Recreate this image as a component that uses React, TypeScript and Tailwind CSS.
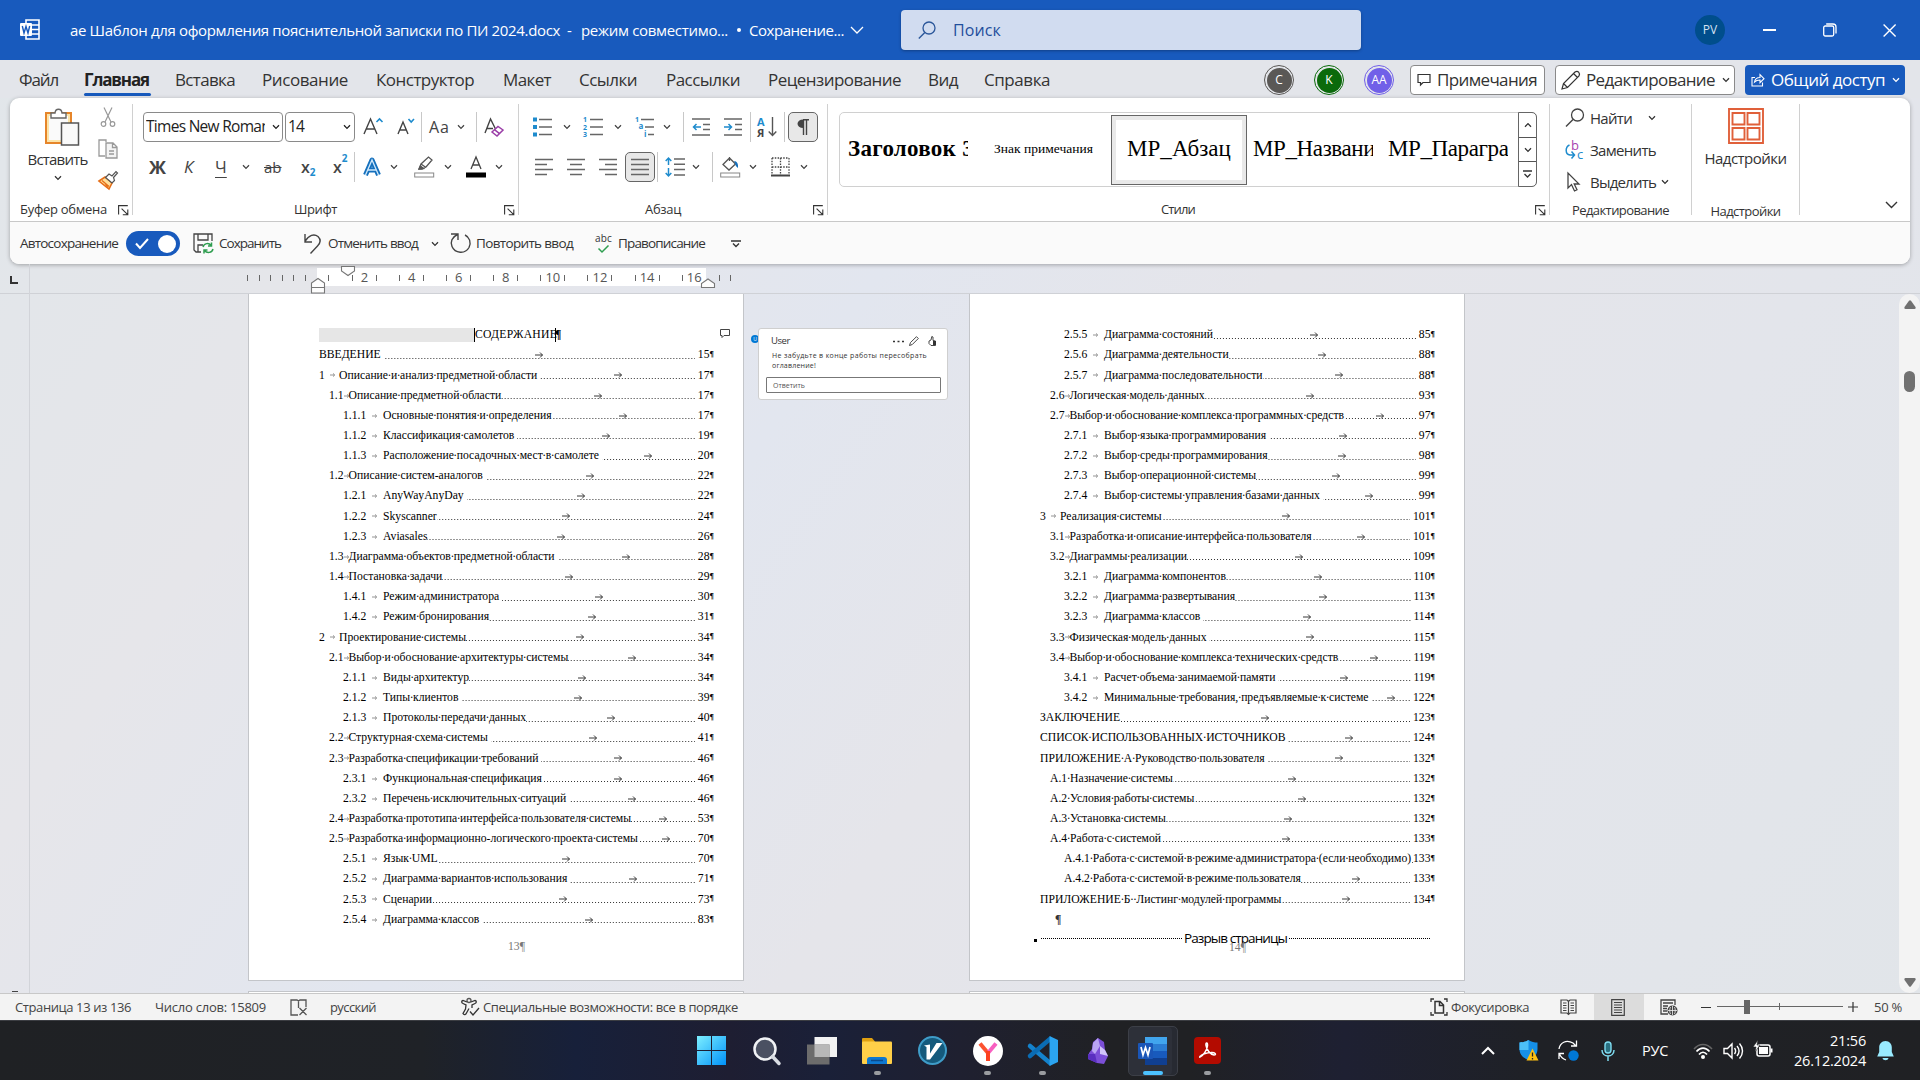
import React, { Fragment, useLayoutEffect, useRef } from 'react';

/* Label that spreads its letters so the text exactly fills its slot. */
function Fit({ className = '', children }: { className?: string; children: string }) {
  const outer = useRef<HTMLSpanElement>(null);
  const inner = useRef<HTMLSpanElement>(null);
  useLayoutEffect(() => {
    const o = outer.current;
    const i = inner.current;
    if (!o || !i) return;
    i.style.letterSpacing = '0px';
    const gap = o.getBoundingClientRect().width - i.getBoundingClientRect().width;
    i.style.letterSpacing = `${gap / children.length}px`;
  }, [children]);
  return (
    <span ref={outer} className={'block shrink-0 whitespace-nowrap ' + className}>
      <span ref={inner} className="inline-block whitespace-pre">{children}</span>
    </span>
  );
}

function Chev({ className = '' }: { className?: string }) {
  return (
    <svg className={'shrink-0 ' + className} width="8" height="6" viewBox="0 0 8 6" fill="none" stroke="currentColor" strokeWidth="1.3">
      <path d="M1 1.2 4 4.4 7 1.2" />
    </svg>
  );
}

function Sep({ className = '' }: { className?: string }) {
  return <div className={'h-[30px] w-px shrink-0 bg-[#c8c8c8] ' + className} />;
}

function Divider() {
  return <div className="mt-[6px] h-[111px] w-px shrink-0 bg-[#d0d0d0]" />;
}

function Launcher({ className = '' }: { className?: string }) {
  return (
    <svg className={'shrink-0 ' + className} width="11" height="11" viewBox="0 0 11 11" fill="none" stroke="#333" strokeWidth="1.1">
      <path d="M.6 9.5V.6h9.2M3.6 3.6l5.6 5.6M9.8 4.6v5.2H4.8" />
    </svg>
  );
}

function Svg({ w = 20, h = 20, className = '', children }: { w?: number; h?: number; className?: string; children: React.ReactNode }) {
  return (
    <svg className={'shrink-0 overflow-visible ' + className} width={w} height={h} viewBox={`0 0 ${w} ${h}`} fill="none" stroke="#555" strokeWidth="1.3">
      {children}
    </svg>
  );
}

const serif = "font-['Liberation_Serif',serif]";

function TitleBar() {
  return (
    <header className="flex h-[60px] items-center bg-[#185abd] text-white">
      <Svg className="ml-5" w={20} h={22}>
        <path d="M6 1h13v19H6zM6 6h13M6 10.5h13M6 15h13" stroke="#fff" strokeWidth="1.6" />
        <rect x="0" y="4" width="12" height="13" rx="1" fill="#fff" stroke="none" />
        <path d="M2.3 7l1.7 7 2-6.5L8 14l1.7-7" stroke="#185abd" strokeWidth="1.4" />
      </Svg>
      <Fit className="ml-[30px] w-[490px] text-[15px]">ае Шаблон для оформления пояснительной записки по ПИ 2024.docx</Fit>
      <span className="ml-[7px] w-[14px] text-[15px]">-</span>
      <Fit className="w-[147px] text-[15px]">режим совместимо...</Fit>
      <span className="ml-[9px] size-[4px] rounded-full bg-white" />
      <Fit className="ml-2 w-[95px] text-[15px]">Сохранение...</Fit>
      <Svg className="ml-[6px]" w={14} h={8}><path d="M1 1l6 6 6-6" stroke="#fff" strokeWidth="1.3" /></Svg>
      <div className="ml-[37px] flex h-10 w-[460px] items-center rounded-[4px] bg-[#d1dcf0] text-[#1f4e9c] shadow-[0_1px_3px_rgba(0,0,0,.3)]">
        <Svg className="ml-[17px]" w={18} h={18}>
          <circle cx="11" cy="7" r="6" stroke="#2b579a" /><path d="M6.8 11.4.8 17.4" stroke="#2b579a" strokeWidth="1.4" />
        </Svg>
        <Fit className="ml-[17px] w-[48px] text-[16px]">Поиск</Fit>
      </div>
      <div className="ml-[334px] flex size-[30px] items-center justify-center rounded-full bg-[#004e8c] text-[12px] text-[#d5e2f2]">PV</div>
      <div className="ml-[38px] h-[1.5px] w-[13px] bg-white" />
      <Svg className="ml-[47px]" w={14} h={14}>
        <rect x=".7" y="3" width="10" height="10" rx="1.5" stroke="#fff" /><path d="M3.2 1h6.8a3 3 0 0 1 3 3v6.6" stroke="#fff" />
      </Svg>
      <Svg className="ml-[46px]" w={13} h={13}><path d="M.6.6l12 12M12.6.6l-12 12" stroke="#fff" strokeWidth="1.4" /></Svg>
    </header>
  );
}

function Avatar({ className, children }: { className: string; children: string }) {
  return (
    <div className={'flex size-[30px] shrink-0 items-center justify-center rounded-full border bg-clip-content p-[1.5px] text-[12px] text-white ' + className}>
      {children}
    </div>
  );
}

function Tabs() {
  return (
    <nav className="flex h-[38px] items-center bg-[#e3e5ea] pt-px text-[17px] text-[#333]">
      <Fit className="ml-[19px] w-[39px]">Файл</Fit>
      <div className="ml-[26px] flex h-[36px] w-[67px] flex-col justify-end pb-[2px]">
        <Fit className="w-[65px] font-bold text-[#222]">Главная</Fit>
        <div className="h-[3px] rounded-full bg-[#185abd]" />
      </div>
      <Fit className="ml-[24px] w-[60px]">Вставка</Fit>
      <Fit className="ml-[27px] w-[86px]">Рисование</Fit>
      <Fit className="ml-[28px] w-[98px]">Конструктор</Fit>
      <Fit className="ml-[29px] w-[48px]">Макет</Fit>
      <Fit className="ml-[28px] w-[58px]">Ссылки</Fit>
      <Fit className="ml-[29px] w-[74px]">Рассылки</Fit>
      <Fit className="ml-[28px] w-[133px]">Рецензирование</Fit>
      <Fit className="ml-[27px] w-[30px]">Вид</Fit>
      <Fit className="ml-[26px] w-[66px]">Справка</Fit>
      <Avatar className="ml-[214px] border-[#5a5856] bg-[#5a5856]">C</Avatar>
      <Avatar className="ml-[20px] border-[#0b6a0b] bg-[#0b6a0b]">K</Avatar>
      <Avatar className="ml-[20px] border-[#7160e8] bg-[#7160e8]">AA</Avatar>
      <div className="ml-[16px] flex h-[30px] w-[135px] items-center rounded-[4px] border border-[#8a8a8a] bg-white">
        <Svg className="ml-[6px]" w={14} h={14}><path d="M1 1.5h12v8H6L3.5 12V9.5H1z" stroke="#333" strokeWidth="1.2" /></Svg>
        <Fit className="ml-[6px] w-[100px]">Примечания</Fit>
      </div>
      <div className="ml-[10px] flex h-[30px] w-[180px] items-center rounded-[4px] border border-[#8a8a8a] bg-white">
        <Svg className="ml-[5px]" w={20} h={20}>
          <path d="M1 19l1.5-5.5L14 2c2.8-2 5.5.8 4 4L6.5 17.5zM12.500 3.500l4 4M2.500 13.500l4 4" stroke="#333" strokeWidth="1.2" />
        </Svg>
        <Fit className="ml-[5px] w-[129px]">Редактирование</Fit>
        <Chev className="ml-[7px]" />
      </div>
      <div className="ml-[10px] flex h-[30px] w-[160px] items-center rounded-[4px] bg-[#185abd] text-white">
        <Svg className="ml-[6px]" w={14} h={14}>
          <path d="M4 4.500H1v8.500h10.500V9.500M3.500 9c.5-3 2.500-4.500 5.500-4.500V1.500l4 4.200-4 4V7C6.500 7 5 7.500 3.500 9z" stroke="#fff" strokeWidth="1.1" />
        </Svg>
        <Fit className="ml-[6px] w-[114px]">Общий доступ</Fit>
        <Chev className="ml-[7px]" />
      </div>
    </nav>
  );
}

function GroupLabel({ children }: { children: React.ReactNode }) {
  return <div className="flex h-[20px] items-center text-[13px] text-[#333]">{children}</div>;
}

function Clipboard() {
  return (
    <section className="flex w-[122px] flex-col">
      <div className="flex h-[102px]">
        <div className="flex w-[78px] flex-col items-center pl-[17px] pt-[10px]">
          <Svg w={36} h={38} className="ml-2">
            <rect x="2" y="5" width="25" height="30" fill="#fce4a8" stroke="#e6852a" strokeWidth="2" />
            <rect x="5" y="8" width="19" height="24" fill="#fafafa" stroke="none" />
            <path d="M7 10V5h4c.5-5 6.500-5 7 0h4v5z" fill="#fff" stroke="#666" strokeWidth="1.4" />
            <rect x="17.500" y="15" width="17" height="22" fill="#fafafa" stroke="#555" strokeWidth="1.5" />
          </Svg>
          <Fit className="mt-[3px] w-[60px] text-[15px] leading-[20px] text-[#333]">Вставить</Fit>
          <Chev className="mt-[6px] text-[#333]" />
        </div>
        <div className="ml-[10px] flex w-[20px] flex-col pt-[9px]">
          <Svg w={20} h={20}>
            <path d="M6 .5l7 14.500M14 .5L7 15" stroke="#999" strokeWidth="1.2" /><circle cx="5.500" cy="17" r="2.300" stroke="#999" strokeWidth="1.2" /><circle cx="14.500" cy="17" r="2.300" stroke="#999" strokeWidth="1.2" />
          </Svg>
          <Svg className="mt-[12px]" w={20} h={20}>
            <path d="M8 3V1H1v16h6" stroke="#999" /><path d="M8 4h7l4 4v11H8zM14.500 4v4.500H19M11 12h5M11 15h5" stroke="#999" fill="#f4f4f4" />
          </Svg>
          <Svg className="mt-[11px]" w={20} h={20}>
            <path d="M1 11l6-4 7 6-3 6z" fill="#ffdf9a" stroke="#e6701a" strokeWidth="1.6" /><path d="M4 10.500l7 6M7.500 14L10 18" stroke="#e6701a" />
            <path d="M7.500 7.500L11 4l3 2 4-4.500 1.500 1.500-4 4.500 1 3-2.500 2.500z" fill="#fff" stroke="#555" strokeWidth="1.2" />
          </Svg>
        </div>
      </div>
      <GroupLabel><Fit className="ml-[10px] w-[87px]">Буфер обмена</Fit><Launcher className="ml-[11px]" /></GroupLabel>
    </section>
  );
}

function FontGroup() {
  return (
    <section className="flex w-[385px] flex-col pt-[14px] text-[#444]">
      <div className="flex h-[30px] items-center pl-[10px]">
        <div className="flex h-[30px] w-[140px] items-center rounded-[4px] border border-[#8a8a8a] text-[15.5px] text-[#222]">
          <div className="ml-[2px] w-[119px] overflow-hidden"><Fit className="w-[124px]">Times New Roman</Fit></div>
          <Chev className="ml-[7px]" />
        </div>
        <div className="ml-[2px] flex h-[30px] w-[70px] items-center rounded-[4px] border border-[#8a8a8a] text-[15.5px] text-[#222]">
          <Fit className="ml-[2px] w-[16px]">14</Fit>
          <Chev className="ml-[39px]" />
        </div>
        <Svg className="ml-[8px]" w={20} h={20}>
          <path d="M1 17L7.500 2 14 17M3.500 12h8" stroke="#444" strokeWidth="1.4" /><path d="M13.500 5l3-3 3 3" stroke="#1e8bcd" strokeWidth="1.6" />
        </Svg>
        <Svg className="ml-[13px]" w={20} h={20}>
          <path d="M2 17L7 5l5 12M4 13h6" stroke="#444" strokeWidth="1.4" /><path d="M12.500 2l2.700 3L18 2" stroke="#1e8bcd" strokeWidth="1.6" />
        </Svg>
        <Sep className="ml-[5px]" />
        <Fit className="ml-[7px] w-[21px] text-[16px]">Aa</Fit>
        <Chev className="ml-[7px]" />
        <Sep className="ml-[11px]" />
        <Svg className="ml-[7px]" w={20} h={20}>
          <path d="M1 16L6.500 2 12 13M3 11.500h6" stroke="#444" strokeWidth="1.4" /><path d="M8 15l6-5.500 5 3.500-6 6zM10.500 12.700l5 4" stroke="#9b3fa8" strokeWidth="1.5" fill="#fff" />
        </Svg>
      </div>
      <div className="mt-[10px] flex h-[30px] items-center pl-[16px]">
        <span className="w-[35px] text-[18px] font-bold">Ж</span>
        <span className="w-[31px] text-[17px] italic">К</span>
        <span className="w-[27px] text-[17px] underline underline-offset-4">Ч</span>
        <Chev />
        <span className="ml-[14px] w-[37px] text-[15px] line-through">ab</span>
        <span className="flex w-[32px] text-[16px] font-semibold">x<span className="mt-[10px] text-[10px] font-bold text-[#1e8bcd]">2</span></span>
        <span className="flex w-[21px] text-[16px] font-semibold">x<span className="-mt-[4px] text-[10px] font-bold text-[#1e8bcd]">2</span></span>
        <Sep />
        <Svg className="ml-[7px]" w={20} h={20}>
          <path d="M3.500 18L10 3l6.500 15M6 13h8" stroke="#1570bd" strokeWidth="5" strokeLinejoin="round" /><path d="M3.500 18L10 3l6.500 15M6 13h8" stroke="#cfe8fb" strokeWidth="1.3" />
        </Svg>
        <Chev className="ml-[8px]" />
        <Svg className="ml-[16px]" w={20} h={22}>
          <path d="M5 13l2-5 7.500-7 3.500 3L12 11l-4 2zM7 8l5 3.500" stroke="#555" /><path d="M5 13l1.500-3 3 2.500z" fill="#555" /><rect x=".7" y="17" width="19" height="4" fill="#fff" stroke="#888" strokeWidth="1" />
        </Svg>
        <Chev className="ml-[10px]" />
        <Svg className="ml-[14px]" w={20} h={22}>
          <path d="M5 13L10 1l5 12M6.500 9h7" stroke="#444" strokeWidth="1.3" /><rect x="0" y="16.500" width="20" height="5" fill="#000" stroke="none" />
        </Svg>
        <Chev className="ml-[9px]" />
      </div>
      <GroupLabelRow><Fit className="ml-[161px] w-[43px]">Шрифт</Fit><Launcher className="ml-[167px]" /></GroupLabelRow>
    </section>
  );
}

function GroupLabelRow({ children }: { children: React.ReactNode }) {
  return <div className="mt-[18px] flex h-[20px] items-center text-[13px] text-[#333]">{children}</div>;
}

function Lines({ d }: { d: string }) {
  return <Svg w={18} h={18}><path d={d} stroke="#666" strokeWidth="1.5" /></Svg>;
}

function ParagraphGroup() {
  return (
    <section className="flex w-[308px] flex-col pt-[14px] text-[#444]">
      <div className="flex h-[30px] items-center pl-[13px]">
        <Svg w={20} h={20}>
          <path d="M7 2.500h13M7 10h13M7 17.500h13" stroke="#666" strokeWidth="1.5" /><path d="M1 2.500h4M1 10h4M1 17.500h4" stroke="#1e8bcd" strokeWidth="3.8" />
        </Svg>
        <Chev className="ml-[11px]" />
        <Svg className="ml-[12px]" w={20} h={20}>
          <path d="M7 2.500h13M7 10h13M7 17.500h13" stroke="#666" strokeWidth="1.5" />
          <text x="0" y="5" fontSize="7" fontWeight="700" fill="#1e8bcd" stroke="none">1</text><text x="0" y="12.500" fontSize="7" fontWeight="700" fill="#1e8bcd" stroke="none">2</text><text x="0" y="20" fontSize="7" fontWeight="700" fill="#1e8bcd" stroke="none">3</text>
        </Svg>
        <Chev className="ml-[11px]" />
        <Svg className="ml-[13px]" w={20} h={20}>
          <path d="M6 2.500h13M10 10h9M13 17.500h6" stroke="#666" strokeWidth="1.5" />
          <text x="0" y="5" fontSize="7" fontWeight="700" fill="#1e8bcd" stroke="none">1</text><text x="3.500" y="12" fontSize="8" fontWeight="700" fill="#1e8bcd" stroke="none">a</text><text x="9" y="20" fontSize="8" fontWeight="700" fill="#1e8bcd" stroke="none">i</text>
        </Svg>
        <Chev className="ml-[8px]" />
        <Sep className="ml-[12px]" />
        <Svg className="ml-[8px]" w={18} h={20}>
          <path d="M0 2h18M11 7.500h7M11 12.500h7M0 18h18" stroke="#666" strokeWidth="1.5" /><path d="M9 10H1.500M4.500 7l-3 3 3 3" stroke="#1e8bcd" strokeWidth="1.5" />
        </Svg>
        <Svg className="ml-[14px]" w={18} h={20}>
          <path d="M0 2h18M11 7.500h7M11 12.500h7M0 18h18" stroke="#666" strokeWidth="1.5" /><path d="M0 10h7.500M4.500 7l3 3-3 3" stroke="#1e8bcd" strokeWidth="1.5" />
        </Svg>
        <Sep className="ml-[8px]" />
        <div className="ml-[6px] flex w-[20px] items-center">
          <div className="flex w-[10px] flex-col text-[11px] font-bold leading-[11px]"><span className="text-[#1e8bcd]">А</span><span>Я</span></div>
          <Svg className="ml-[1px]" w={9} h={20}><path d="M4.500 0v18.500M.7 14.500l3.800 4 3.800-4" stroke="#555" strokeWidth="1.4" /></Svg>
        </div>
        <Sep className="ml-[7px]" />
        <div className="ml-[3px] flex size-[30px] items-center justify-center rounded-[5px] border border-[#666] bg-[#e8e8e8]">
          <Svg w={12} h={16}><path d="M6 .7h6M6.500 1v15M9.500 1v15" stroke="#444" strokeWidth="1.4" /><path d="M6.500.5v8.500C-1.500 9-1.500.5 6.500.5z" fill="#444" stroke="none" /></Svg>
        </div>
      </div>
      <div className="mt-[10px] flex h-[30px] items-center pl-[16px]">
        <Lines d="M0 1.500h18M0 6.500h12M0 11.500h18M0 16.500h12" />
        <div className="w-[14px]" />
        <Lines d="M0 1.500h18M3 6.500h12M0 11.500h18M3 16.500h12" />
        <div className="w-[14px]" />
        <Lines d="M0 1.500h18M6 6.500h12M0 11.500h18M6 16.500h12" />
        <div className="ml-[8px] flex size-[30px] items-center justify-center rounded-[5px] border border-[#666] bg-[#e8e8e8]">
          <Lines d="M0 1.500h18M0 6.500h18M0 11.500h18M0 16.500h18" />
        </div>
        <Sep className="ml-[2px]" />
        <Svg className="ml-[7px]" w={20} h={20}>
          <path d="M9 2h11M9 7.300h11M9 12.600h11M9 18h11" stroke="#666" strokeWidth="1.5" /><path d="M3.500 1v7M.7 4l2.800-3 2.800 3M3.500 11v8M.7 16l2.800 3 2.800-3" stroke="#1e8bcd" strokeWidth="1.5" />
        </Svg>
        <Chev className="ml-[7px]" />
        <Sep className="ml-[12px]" />
        <Svg className="ml-[7px]" w={20} h={22}>
          <path d="M3 8.500L9.500 2l6 6-6.500 6zM9.500 5V1" stroke="#555" /><path d="M14 5c3 0 4.500 3 4 7-1.500-1-3-3-3-5z" fill="#1570bd" stroke="none" /><rect x=".7" y="17" width="19" height="4" fill="#fff" stroke="#888" strokeWidth="1" />
        </Svg>
        <Chev className="ml-[9px]" />
        <Svg className="ml-[14px]" w={19} h={20}>
          <path d="M1 1h17M1 1v16M18 1v16M9.500 1v17M1 10h17" stroke="#444" strokeDasharray="1.5 1.3" strokeWidth="1.3" /><path d="M0 18.500h19" stroke="#444" strokeWidth="2" />
        </Svg>
        <Chev className="ml-[10px]" />
      </div>
      <GroupLabelRow><Fit className="ml-[126px] w-[36px]">Абзац</Fit><Launcher className="ml-[132px]" /></GroupLabelRow>
    </section>
  );
}

function StylesGroup() {
  return (
    <section className="flex w-[721px] flex-col pt-[14px] text-[#444]">
      <div className={'ml-[11px] flex h-[75px] w-[698px] items-center rounded-[5px] border border-[#d0d0d0] text-[23px] text-black ' + serif}>
        <div className="ml-[8px] w-[120px] shrink-0 overflow-hidden"><Fit className="w-[126px] font-bold">Заголовок 3</Fit></div>
        <Fit className="ml-[26px] w-[99px] text-[13.5px]">Знак примечания</Fit>
        <div className="ml-[18px] flex h-[70px] w-[136px] shrink-0 items-center justify-center border border-[#666] bg-[#e9e9e9] p-[4px]">
          <div className="flex h-full w-full items-center justify-center bg-white"><Fit className="w-[104px]">МР_Абзац</Fit></div>
        </div>
        <div className="ml-[6px] w-[120px] shrink-0 overflow-hidden"><Fit className="w-[132px]">МР_Название</Fit></div>
        <div className="ml-[15px] w-[120px] shrink-0 overflow-hidden"><Fit className="w-[135px]">МР_Параграф</Fit></div>
        <div className="-mr-px ml-auto flex h-[75px] w-[19px] flex-col divide-y divide-[#555] rounded-r-[5px] border border-[#666] text-[#333]">
          <div className="flex flex-1 items-center justify-center"><Chev className="rotate-180" /></div>
          <div className="flex flex-1 items-center justify-center"><Chev /></div>
          <div className="flex flex-1 items-center justify-center">
            <Svg w={9} h={9}><path d="M0 1h9M1.500 4l3 3 3-3" stroke="#333" /></Svg>
          </div>
        </div>
      </div>
      <div className="mt-[13px] flex h-[20px] items-center text-[13px] text-[#333]"><Fit className="ml-[333px] w-[34px]">Стили</Fit><Launcher className="ml-[340px]" /></div>
    </section>
  );
}

function EditingGroup() {
  return (
    <section className="flex w-[141px] flex-col text-[15px] text-[#333]">
      <div className="mt-[4px] flex h-[32px] items-center pl-[15px]">
        <Svg w={20} h={20}><circle cx="12.500" cy="7" r="6" stroke="#444" /><path d="M8 11.500L1 18.500" stroke="#444" strokeWidth="1.5" /></Svg>
        <Fit className="ml-[5px] w-[42px]">Найти</Fit>
        <Chev className="ml-[16px]" />
      </div>
      <div className="flex h-[32px] items-center pl-[15px]">
        <Svg w={20} h={20}>
          <text x="6" y="9.500" fontSize="13" fill="#a844b0" stroke="none">b</text><text x="12" y="19" fontSize="13" fill="#1e8bcd" stroke="none">c</text>
          <path d="M4.500 5C0 7 0 14.500 5 15h4M6.500 11.500l3 3.500-3 3.500" stroke="#1e8bcd" strokeWidth="1.5" />
        </Svg>
        <Fit className="ml-[5px] w-[66px]">Заменить</Fit>
      </div>
      <div className="flex h-[32px] items-center pl-[15px]">
        <Svg w={20} h={20}><path d="M3 1v15l3.500-3.500L9.500 19l2.500-1.200L9.200 12H14z" stroke="#444" /></Svg>
        <Fit className="ml-[5px] w-[66px]">Выделить</Fit>
        <Chev className="ml-[5px]" />
      </div>
      <div className="mt-[3px] flex h-[20px] items-center text-[13px]"><Fit className="ml-[22px] w-[97px]">Редактирование</Fit></div>
    </section>
  );
}

function AddinsGroup() {
  return (
    <section className="flex w-[107px] flex-col items-center text-[#333]">
      <Svg className="mt-[10px]" w={36} h={36}>
        <path d="M1 1h34v34H1zM4.500 5h12v11.500h-12zM19.500 5h12v11.500h-12zM4.500 20h12v11.500h-12zM19.500 20h12v11.500h-12z" stroke="#e0603a" strokeWidth="1.9" />
      </Svg>
      <Fit className="mt-[4px] w-[82px] text-[15px] leading-[20px]">Надстройки</Fit>
      <Fit className="mt-[33px] w-[70px] text-[13px] leading-[20px]">Надстройки</Fit>
    </section>
  );
}

function Ribbon() {
  return (
    <div className="mx-[10px] flex h-[166px] flex-col overflow-hidden rounded-[9px] bg-white shadow-[0_1px_4px_rgba(0,0,0,.3)]">
      <div className="flex h-[123px]">
        <Clipboard /><Divider />
        <FontGroup /><Divider />
        <ParagraphGroup /><Divider />
        <StylesGroup /><Divider />
        <EditingGroup /><Divider />
        <AddinsGroup /><Divider />
        <Svg className="ml-auto mr-[12px] mt-[103px]" w={13} h={8}><path d="M1 1l5.500 5.500L12 1" stroke="#333" strokeWidth="1.4" /></Svg>
      </div>
      <div className="flex h-[43px] items-center border-t border-[#c8c8c8] bg-[#fafafa] pt-px text-[13.5px] text-[#333]">
        <Fit className="ml-[10px] w-[98px]">Автосохранение</Fit>
        <div className="ml-[8px] flex h-[25px] w-[54px] items-center justify-between rounded-full bg-[#185abd] pl-[9px] pr-[4px]">
          <Svg w={14} h={11}><path d="M1 5.500l4 4.500L13 1" stroke="#fff" strokeWidth="2" /></Svg>
          <div className="size-[18px] rounded-full bg-white" />
        </div>
        <Svg className="ml-[13px]" w={21} h={21}>
          <path d="M8 19H3l-2-2V1h18v7M5 1v6h10V1M5 19v-7h5" stroke="#444" />
          <path d="M10 14c1-4 6-4.500 8-1.500M18.500 9.500v3.500H15M20 16c-1 4-6 4.500-8.500 1.500M11 20.500V17h3.500" stroke="#2f9e50" strokeWidth="1.5" />
        </Svg>
        <Fit className="ml-[5px] w-[62px]">Сохранить</Fit>
        <Svg className="ml-[23px]" w={18} h={20}><path d="M1 0v8h7M1 7.500C5 1 10-.5 14 2.500c3 3 3 6-.5 9.500l-7 7.500" stroke="#444" strokeWidth="1.4" /></Svg>
        <Fit className="ml-[6px] w-[90px]">Отменить ввод</Fit>
        <Chev className="ml-[13px]" />
        <Svg className="ml-[11px]" w={21} h={21}><path d="M1 1h7v6M7.500 1.500C2 4 0 9 2 13.500c3 7 13 8 17 1 2.500-5 .5-10.500-4-12.500" stroke="#444" strokeWidth="1.4" /></Svg>
        <Fit className="ml-[5px] w-[97px]">Повторить ввод</Fit>
        <div className="ml-[22px] flex w-[17px] flex-col items-center">
          <Fit className="w-[17px] text-[10px] leading-[9px]">abc</Fit>
          <Svg className="mt-[2px]" w={11} h={8}><path d="M.5 3.500L4 7l6.500-6.500" stroke="#2f9e50" strokeWidth="1.5" /></Svg>
        </div>
        <Fit className="ml-[6px] w-[87px]">Правописание</Fit>
        <Svg className="ml-[26px]" w={10} h={8}><path d="M0 1h10M2 3.500l3 3 3-3" stroke="#333" strokeWidth="1.4" /></Svg>
      </div>
    </div>
  );
}

function Tick({ className = '' }: { className?: string }) {
  return <div className={'h-[6px] w-px shrink-0 bg-[#666] ' + className} />;
}

const rulerMarks = ['2', '4', '6', '8', '10', '12', '14', '16'];

function Ruler() {
  return (
    <div className="relative flex h-[30px] items-start border-b border-[#cfd1d6] pt-[4px]">
      <svg className="ml-[10px] mt-[8px]" width="8" height="8" viewBox="0 0 8 8"><path d="M1 0v7h7" stroke="#333" strokeWidth="2" fill="none" /></svg>
      <div className="-mt-[4px] ml-[11px] h-[30px] w-px bg-[#d2d4d9]" />
      <div className="ml-[217px] flex h-[19px] w-[70px] items-center gap-[10.5px]">
        <Tick /><Tick /><Tick /><Tick /><Tick /><Tick />
      </div>
      <div className="flex h-[18px] w-[389px] items-center overflow-hidden bg-white pt-px">
        <div className="flex w-[23px] shrink-0 pl-[11px]"><Tick /></div>
        {rulerMarks.map((n) => (
          <div key={n} className="flex w-[47.1px] shrink-0 items-center">
            <Tick className="ml-[12px]" />
            <span className="w-[23px] text-center text-[13px] leading-[17px] text-[#555]">{n}</span>
            <Tick />
          </div>
        ))}
      </div>
      <div className="ml-[13px] flex h-[19px] items-center gap-[10px]"><Tick /><Tick /></div>
      <svg className="absolute left-[310px] top-0 overflow-visible" width="410" height="30" viewBox="0 0 410 30" fill="#fdfdfd" stroke="#777" strokeWidth="1.1">
        <path d="M31.500 2.500h13v4.500L38 11.500 31.500 7zM1.500 23.500v-4.500L8 14.500l6.500 4.500v4.500zM1.500 23.500h13v5.500h-13zM391.500 23.500v-4L398 15l6.500 4.500v4z" />
      </svg>
    </div>
  );
}

function TabArrow({ faint = false }: { faint?: boolean }) {
  return (
    <svg className="shrink-0 overflow-visible" width={faint ? 5 : 8} height="6" viewBox={faint ? '0 0 5 6' : '0 0 8 6'} fill="none" stroke={faint ? '#888' : '#222'} strokeWidth=".9">
      {faint ? <path d="M0 3h4.500M3 1.400L4.700 3 3 4.600" /> : <path d="M0 3h7.500M5 .5L7.500 3 5 5.500" />}
    </svg>
  );
}

type Entry = [level: 0 | 1 | 2 | 3 | 4 | 5, num: string, title: string, page: string];

const left: Entry[] = [
  [0, '', 'ВВЕДЕНИЕ ', '15'],
  [1, '1', 'Описание·и·анализ·предметной·области ', '17'],
  [2, '1.1', 'Описание·предметной·области', '17'],
  [3, '1.1.1', 'Основные·понятия·и·определения', '17'],
  [3, '1.1.2', 'Классификация·самолетов ', '19'],
  [3, '1.1.3', 'Расположение·посадочных·мест·в·самолете ', '20'],
  [2, '1.2', 'Описание·систем-аналогов ', '22'],
  [3, '1.2.1', 'AnyWayAnyDay ', '22'],
  [3, '1.2.2', 'Skyscanner', '24'],
  [3, '1.2.3', 'Aviasales', '26'],
  [2, '1.3', 'Диаграмма·объектов·предметной·области ', '28'],
  [2, '1.4', 'Постановка·задачи', '29'],
  [3, '1.4.1', 'Режим·администратора ', '30'],
  [3, '1.4.2', 'Режим·бронирования', '31'],
  [1, '2', 'Проектирование·системы', '34'],
  [2, '2.1', 'Выбор·и·обоснование·архитектуры·системы', '34'],
  [3, '2.1.1', 'Виды·архитектур', '34'],
  [3, '2.1.2', 'Типы·клиентов ', '39'],
  [3, '2.1.3', 'Протоколы·передачи·данных', '40'],
  [2, '2.2', 'Структурная·схема·системы ', '41'],
  [2, '2.3', 'Разработка·спецификации·требований ', '46'],
  [3, '2.3.1', 'Функциональная·спецификация', '46'],
  [3, '2.3.2', 'Перечень·исключительных·ситуаций ', '46'],
  [2, '2.4', 'Разработка·прототипа·интерфейса·пользователя·системы', '53'],
  [2, '2.5', 'Разработка·информационно-логического·проекта·системы', '70'],
  [3, '2.5.1', 'Язык·UML', '70'],
  [3, '2.5.2', 'Диаграмма·вариантов·использования ', '71'],
  [3, '2.5.3', 'Сценарии', '73'],
  [3, '2.5.4', 'Диаграмма·классов ', '83'],
];

const right: Entry[] = [
  [3, '2.5.5', 'Диаграмма·состояний', '85'],
  [3, '2.5.6', 'Диаграмма·деятельности', '88'],
  [3, '2.5.7', 'Диаграмма·последовательности', '88'],
  [2, '2.6', 'Логическая·модель·данных', '93'],
  [2, '2.7', 'Выбор·и·обоснование·комплекса·программных·средств', '97'],
  [3, '2.7.1', 'Выбор·языка·программирования ', '97'],
  [3, '2.7.2', 'Выбор·среды·программирования', '98'],
  [3, '2.7.3', 'Выбор·операционной·системы', '99'],
  [3, '2.7.4', 'Выбор·системы·управления·базами·данных ', '99'],
  [1, '3', 'Реализация·системы', '101'],
  [2, '3.1', 'Разработка·и·описание·интерфейса·пользователя', '101'],
  [2, '3.2', 'Диаграммы·реализации', '109'],
  [3, '3.2.1', 'Диаграмма·компонентов', '110'],
  [3, '3.2.2', 'Диаграмма·развертывания', '113'],
  [3, '3.2.3', 'Диаграмма·классов ', '114'],
  [2, '3.3', 'Физическая·модель·данных ', '115'],
  [2, '3.4', 'Выбор·и·обоснование·комплекса·технических·средств', '119'],
  [3, '3.4.1', 'Расчет·объема·занимаемой·памяти ', '119'],
  [3, '3.4.2', 'Минимальные·требования,·предъявляемые·к·системе ', '122'],
  [0, '', 'ЗАКЛЮЧЕНИЕ', '123'],
  [0, '', 'СПИСОК·ИСПОЛЬЗОВАННЫХ·ИСТОЧНИКОВ ', '124'],
  [0, '', 'ПРИЛОЖЕНИЕ·А·Руководство·пользователя ', '132'],
  [4, '', 'А.1·Назначение·системы', '132'],
  [4, '', 'А.2·Условия·работы·системы', '132'],
  [4, '', 'А.3·Установка·системы', '132'],
  [4, '', 'А.4·Работа·с·системой', '133'],
  [5, '', 'А.4.1·Работа·с·системой·в·режиме·администратора·(если·необходимо)', '133'],
  [5, '', 'А.4.2·Работа·с·системой·в·режиме·пользователя', '133'],
  [0, '', 'ПРИЛОЖЕНИЕ·Б··Листинг·модулей·программы', '134'],
];

const indent = ['', '', 'pl-[10px]', 'pl-[24px]', 'pl-[10px]', 'pl-[24px]'];
const numWidth = ['', 'w-[20px] pr-[4px]', 'w-[19.5px]', 'w-[40px] pr-[6px]', '', ''];

/* Word-style text: each space mark takes exactly the width of a space. */
function Marked({ text }: { text: string }) {
  return (
    <>
      {text.split('·').map((word, i) => (
        <Fragment key={i}>
          {i > 0 && <span className="inline-flex w-[.25em] justify-center">·</span>}
          {word}
        </Fragment>
      ))}
    </>
  );
}

function TocRow({ entry: [level, num, title, page] }: { entry: Entry }) {
  const full = title.endsWith(')');
  return (
    <div className={'flex h-[20.17px] w-[395.5px] items-center whitespace-pre ' + indent[level]}>
      {num && (
        <span className={'flex shrink-0 items-center justify-between ' + numWidth[level]}>
          {num}<TabArrow faint />
        </span>
      )}
      <span className="shrink-0"><Marked text={title} /></span>
      <span className="flex h-[9px] min-w-0 flex-1 items-center justify-center bg-[linear-gradient(90deg,transparent_2px,#333_2px)] bg-[length:3px_1px] bg-[position:right_bottom_1px] bg-repeat-x">
        {!full && <TabArrow />}
      </span>
      <span className={full ? '' : 'ml-[2.9px]'}>{page}</span>
      <span className="w-[5px] text-[8px] font-bold">¶</span>
    </div>
  );
}

const pageBox = 'flex h-[687px] w-[496px] shrink-0 flex-col border border-t-0 border-[#c3c5c9] bg-white pt-[31px]';

function CommentCard() {
  return (
    <div className="flex w-[225px] shrink-0 pl-[7px] pt-[34px] font-['Open_Sans',sans-serif]">
      <div className="mt-[7px] flex size-[8px] shrink-0 items-center justify-center rounded-full bg-[#0078d4] text-[5px] text-white">U</div>
      <div className="-ml-px h-[72px] w-[190px] rounded-[3px] border border-[#cfcfcf] bg-white px-[7px] text-[#333]">
        <div className="mt-[5px] flex h-[14px] items-center">
          <Fit className="ml-[5px] w-[19px] text-[9.5px] font-medium">User</Fit>
          <Svg className="ml-[103px]" w={11} h={3}><path d="M0 1.500h2M4.500 1.500h2M9 1.500h2" stroke="#333" strokeWidth="1.6" /></Svg>
          <Svg className="ml-[5px]" w={10} h={10}><path d="M.5 9.500L1.500 6.500 7.500.7 9.300 2.500 3.300 8.500z" stroke="#333" strokeWidth=".9" /></Svg>
          <Svg className="ml-[9px]" w={9} h={10}><path d="M1 5l2-1 .8-3.500 1.200.5v3.500l2.500.5v4.500H3L1 7.500z" stroke="#333" strokeWidth=".9" /><path d="M5 5h3v4H5z" fill="#333" stroke="none" /></Svg>
        </div>
        <div className="mt-[3px] pl-[6px] text-[7px] leading-[9.5px]">
          <Fit className="w-[155px]">Не забудьте в конце работы пересобрать</Fit>
          <Fit className="w-[44px]">оглавление!</Fit>
        </div>
        <div className="mt-[7px] flex h-[16px] w-[175px] items-center rounded-[1px] border border-[#777] pl-[6px] text-[7px] text-[#555]">
          <Fit className="w-[32px]">Ответить</Fit>
        </div>
      </div>
    </div>
  );
}

function Document() {
  return (
    <main className="flex min-h-0 flex-1 overflow-hidden">
      <div className="flex w-[30px] shrink-0 items-end border-r border-[#d2d4d9] pb-[1px] pl-[12px]"><div className="h-px w-[6px] bg-[#444]" /></div>
      <div className={'ml-[218px] flex w-[1651px] flex-col text-[11.67px] leading-none text-black ' + serif}>
        <div className="flex">
          <div className={pageBox}>
            <div className="ml-[70px] flex h-[20.17px] items-center">
              <div className="h-[14px] w-[155px] bg-[#e6e6e6]" />
              <Fit className="h-[14px] w-[82px] border-x border-black leading-[14px]">СОДЕРЖАНИЕ</Fit>
              <span className="-ml-px font-bold">¶</span>
              <Svg className="-mt-[4px] ml-[159px]" w={10} h={9}><path d="M.5.5h9v6H4L2 8.500v-2H.5z" stroke="#444" strokeWidth="1" /></Svg>
            </div>
            <div className="ml-[70px]">{left.map((e) => <TocRow key={e[1] + e[2]} entry={e} />)}</div>
            <div className="mt-[11px] pl-[259px] text-[#777]">13¶</div>
          </div>
          <CommentCard />
          <div className={pageBox}>
            <div className="ml-[70px]">{right.map((e) => <TocRow key={e[1] + e[2]} entry={e} />)}</div>
            <div className="ml-[85px] flex h-[20.17px] items-center font-bold text-[#333]">¶</div>
            <div className="ml-[64px] flex h-[18px] items-center font-['Open_Sans',sans-serif] text-[13.5px]">
              <div className="mt-[4px] size-[3px] bg-black" />
              <div className="ml-[4px] w-[141px] border-t border-dotted border-black" />
              <Fit className="ml-[2px] w-[103px]">Разрыв страницы</Fit>
              <div className="ml-[2px] w-[141px] border-t border-dotted border-black" />
            </div>
            <div className="-mt-[6px] pl-[259px] text-[#777]">14¶</div>
          </div>
        </div>
        <div className="mt-[10px] flex gap-[225px]">
          <div className="h-[10px] w-[496px] border border-[#c3c5c9] bg-white" />
          <div className="h-[10px] w-[496px] border border-[#c3c5c9] bg-white" />
        </div>
      </div>
      <div className="flex w-[21px] shrink-0 flex-col items-center justify-between rounded-full bg-[#f3f3f3] py-[6px]">
        <svg width="12" height="9" viewBox="0 0 12 9"><path d="M5 .8q1-1 2 0l4.500 6.200q.5 2-1 2h-9q-1.500 0-1-2z" fill="#707070" /></svg>
        <div className="mb-auto mt-[62px] h-[21px] w-[11px] rounded-full bg-[#707070]" />
        <svg width="12" height="9" viewBox="0 0 12 9"><path d="M5 8.200q1 1 2 0L11.500 2q.5-2-1-2h-9Q0 0 .5 2z" fill="#707070" /></svg>
      </div>
    </main>
  );
}

function StatusBar() {
  return (
    <div className="flex h-[27px] shrink-0 items-center border-t border-[#c8c8c8] bg-[#f3f3f3] text-[13px] text-[#444]">
      <Fit className="ml-[15px] mt-px w-[116px]">Страница 13 из 136</Fit>
      <Fit className="ml-[24px] mt-px w-[111px]">Число слов: 15809</Fit>
      <Svg className="ml-[24px]" w={18} h={17}><path d="M8 16H1V1h6l1.500 1L10 1h6v7M8.500 2v7M9.500 9l7 7M16.500 9l-7 7" /></Svg>
      <Fit className="ml-[22px] mt-px w-[46px]">русский</Fit>
      <Svg className="ml-[85px]" w={19} h={18}><circle cx="8" cy="2.500" r="2" /><path d="M6 4L2 2.500C0 3 .5 5 2 5.500l3 1.500-.5 4L2 15.500c1 2 3 1 3.500-.5L8 10.500M10 4l4-1.500c2 .5 1.500 2.500 0 3L11 7v3M9 13.500l3 3.500 6-7" stroke="#333" /></Svg>
      <Fit className="ml-[3px] mt-px w-[255px]">Специальные возможности: все в порядке</Fit>
      <Svg className="ml-[692px]" w={18} h={18}><path d="M4 1H1v3M1 14v3h3M14 1h3v3M17 14v3h-3" stroke="#333" /><path d="M5 3.500h5l3.500 3.500v8H5zM9.500 3.500V7.500h4" stroke="#333" strokeWidth="1.5" /></Svg>
      <Fit className="ml-[3px] mt-px w-[78px]">Фокусировка</Fit>
      <Svg className="ml-[31px]" w={17} h={16}><path d="M8.500 2.500L7 1H1v13h6l1.500 1.500L10 14h6V1h-6zM8.500 2.500v13M3 4h3.500M3 6.500h3.500M3 9h3.500M3 11.500h3.500M10.500 4H14M10.500 6.500H14M10.500 9H14M10.500 11.500H14" stroke="#444" strokeWidth="1.2" /></Svg>
      <div className="ml-[17px] flex h-full w-[50px] items-center justify-center bg-[#dcdcdc] pr-[2px]">
        <Svg w={14} h={17}><path d="M.7.7h12.600v15.600H.7zM3 3.500h8M3 6h8M3 8.500h8M3 11h8M3 13.500h8" stroke="#444" strokeWidth="1.2" /></Svg>
      </div>
      <Svg className="ml-[16px]" w={18} h={17}><path d="M8 15H1V1h14v5M3 4h10M3 7h5M3 9.500h4M3 12h4" stroke="#444" /><circle cx="12.500" cy="11.500" r="5" fill="#444" stroke="none" /><path d="M8 11.500h9M12.500 7v9M10.500 8c-1 2-1 5 0 7M14.500 8c1 2 1 5 0 7" stroke="#f3f3f3" strokeWidth=".8" /></Svg>
      <div className="ml-[23px] h-px w-[10px] bg-[#333]" />
      <Svg className="ml-[6px]" w={126} h={16}><path d="M0 7.500h126M62.500 4v7" stroke="#666" strokeWidth="1" /><rect x="27" y="1" width="6" height="14" fill="#666" stroke="none" /></Svg>
      <Svg className="ml-[5px]" w={10} h={10}><path d="M0 5h10M5 0v10" stroke="#333" strokeWidth="1.2" /></Svg>
      <Fit className="ml-[16px] mt-px w-[28px]">50 %</Fit>
    </div>
  );
}

function Slot({ className = '', mark = '', children }: { className?: string; mark?: string; children: React.ReactNode }) {
  return (
    <div className={'flex h-[50px] w-[55.2px] shrink-0 flex-col items-center pt-[10px] ' + className}>
      <div className="flex h-[30px] items-center justify-center">{children}</div>
      {mark && <div className={'mt-[5px] h-[4px] shrink-0 rounded-full ' + mark} />}
    </div>
  );
}

const running = 'w-[7px] bg-[#9a9ca0]';

function Taskbar() {
  return (
    <footer className="flex h-[60px] shrink-0 items-center border-t border-[#3b3d42] bg-[linear-gradient(90deg,#1f2124_0%,#1f2227_22%,#17203a_30%,#1e1e32_38%,#1a2038_43%,#1f2030_50%,#202124_58%,#202124_62%,#1e2032_70%,#1f2126_80%,#202124_100%)] text-white">
      <div className="ml-[684px] flex w-[551px]">
        <Slot>
          <Svg w={29} h={29}>
            <defs><linearGradient id="win" x1="0" y1="0" x2="1" y2="1"><stop offset="0" stopColor="#7defff" /><stop offset="1" stopColor="#0091f8" /></linearGradient></defs>
            <path d="M0 0h14v14H0zM15 0h14v14H15zM0 15h14v14H0zM15 15h14v14H15z" fill="url(#win)" stroke="none" />
          </Svg>
        </Slot>
        <Slot><Svg w={28} h={28}><circle cx="12" cy="12" r="10.500" fill="#4a5062" stroke="#f0f2f5" strokeWidth="2.5" /><path d="M19.500 19.500l6.500 7" stroke="#d8dce2" strokeWidth="3.5" strokeLinecap="round" /></Svg></Slot>
        <Slot><Svg w={30} h={28}><path d="M7.500 0H30v20H7.500z" fill="#f2f2f2" stroke="none" /><path d="M0 7.500h22.500V27.500H0z" fill="#6c6c6c" stroke="none" /><path d="M7.500 7.500h15V20h-15z" fill="#b8b8b8" stroke="none" /></Svg></Slot>
        <Slot mark={running}>
          <Svg w={30} h={27}><path d="M0 2Q0 1 1 1h9l3 3.500V8H0z" fill="#e0a010" stroke="none" /><rect y="4.500" width="30" height="22.500" rx="1" fill="#ffcf48" stroke="none" /><path d="M5 27v-4q0-3 3-3h14q3 0 3 3v4z" fill="#0f78d0" stroke="none" /><path d="M9 23.500h12" stroke="#0a4a8c" strokeWidth="1.5" /></Svg>
        </Slot>
        <Slot><Svg w={29} h={29}><circle cx="14.500" cy="14.500" r="13.500" fill="#155a7c" stroke="#3f9cc8" strokeWidth="2" /><path d="M6 9.500l6-1v9l6.500-10.500h6L12 23.500H8.500V11z" fill="#fff" stroke="none" /></Svg></Slot>
        <Slot mark={running}>
          <Svg w={30} h={30}><circle cx="15" cy="15" r="15" fill="#fff" stroke="none" /><path d="M7 7.500l8 9.500" stroke="#fc5230" strokeWidth="4" /><path d="M23 7.500L15 17" stroke="#f85fc0" strokeWidth="4" /><path d="M15 15v10" stroke="#fc4020" strokeWidth="4" /></Svg>
        </Slot>
        <Slot mark={running}>
          <Svg w={30} h={30}><path d="M2 10l20 17" stroke="#1482cc" strokeWidth="4.5" strokeLinecap="round" /><path d="M2 20L22 3" stroke="#0a6cb4" strokeWidth="4.5" strokeLinecap="round" /><path d="M21.500 0L30 4v22l-8.500 4z" fill="#2ba4f0" stroke="none" /></Svg>
        </Slot>
        <Slot><Svg w={22} h={28}><path d="M11 1l6 4 1 8 3 6-4 8-7-1-9-4 1-6 3-4 1-7z" fill="#7c4fd8" stroke="none" /><path d="M11 1l2 8-5 8-3-3 1-8z" fill="#b9a4f4" stroke="none" /><path d="M1 17l7 0 2 9-9-4z" fill="#5a2fc0" stroke="none" /><path d="M13 9l5 4 3 6-8-2z" fill="#d0c4f8" stroke="none" /></Svg></Slot>
        <div className="ml-[2px] flex h-[50px] w-[50px] shrink-0 flex-col items-center rounded-[5px] border border-[#3c3f47] bg-[#2d3039] pt-[10px] shadow-[inset_-5px_0_0_#272a32]">
          <div className="flex h-[28px] items-center">
            <Svg w={29} h={28}>
              <path d="M7 0h22v7H7z" fill="#41a5ee" stroke="none" /><path d="M7 7h22v7H7z" fill="#2b7cd3" stroke="none" /><path d="M7 14h22v7H7z" fill="#185abd" stroke="none" /><path d="M7 21h22v7H7z" fill="#103f91" stroke="none" />
              <rect y="6" width="15" height="16" rx="1" fill="#1a56b8" stroke="none" /><path d="M3 10l2 8 2.500-7.500L10 18l2-8" stroke="#fff" strokeWidth="1.7" />
            </Svg>
          </div>
          <div className="mt-[6px] h-[4px] w-[20px] shrink-0 rounded-full bg-[#4cc2ff]" />
        </div>
        <Slot className="ml-[2px]" mark={running}>
          <Svg w={27} h={27}><rect width="27" height="27" rx="4" fill="#b30b00" stroke="none" /><path d="M6 20c3-1 7-7 7.500-11 .3-4-2-4-1.500-.5.500 4 4 9 8 9.500 3 0 1-3-3-2.500-4 .3-8 1.500-10 3-1.500 1-1.500 2-1 1.500z" stroke="#fff" strokeWidth="1.5" /></Svg>
        </Slot>
      </div>
      <Svg className="ml-[246px]" w={14} h={8}><path d="M1 7l6-6 6 6" stroke="#fff" strokeWidth="2" /></Svg>
      <Svg className="ml-[24px]" w={20} h={21}>
        <path d="M9.500 0c3 2 6 2.500 9 2.500V9c0 6-4 9-9 11-5-2-9-5-9-11V2.500C3.500 2.500 6.500 2 9.500 0z" fill="#1590e8" stroke="none" /><path d="M9.500 0v10H.5V2.500C3.500 2.500 6.500 2 9.500 0z" fill="#4cc0f8" stroke="none" />
        <path d="M13.500 8.500l6 12h-12z" fill="#fdc010" stroke="none" /><path d="M13.500 12.500v4M13.500 18v1.500" stroke="#222" strokeWidth="1.3" />
      </Svg>
      <Svg className="ml-[19px]" w={21} h={21}><path d="M1 9C2 3 8-1 15 3l3 3M18.500.5V6H13M8 20c-3-1-5-2.500-6.500-6M1 19v-5.500h5" stroke="#fff" strokeWidth="1.3" /><circle cx="15.500" cy="15.500" r="5.200" fill="#0078d7" stroke="none" /></Svg>
      <Svg className="ml-[22px]" w={14} h={20}><rect x="4" y="1" width="6" height="11" rx="3" fill="#2a7080" stroke="#7fdcf0" strokeWidth="1.4" /><path d="M1 9c0 8 12 8 12 0M7 15v5" stroke="#7fdcf0" strokeWidth="1.5" /></Svg>
      <Fit className="ml-[27px] w-[26px] text-[14.5px]">РУС</Fit>
      <Svg className="ml-[25px]" w={20} h={16}><path d="M1 6c5-6 13-6 18 0" stroke="#666" strokeWidth="1.5" /><path d="M3.500 8.500c4-4.500 9-4.500 13 0M6 11.500c2.500-3 5.500-3 8 0" stroke="#fff" strokeWidth="1.7" /><circle cx="10" cy="14" r="2" fill="#fff" stroke="none" /></Svg>
      <Svg className="ml-[10px]" w={20} h={18}><path d="M1 6.500h3.500L9 2v14l-4.500-4.500H1zM11.500 6c1.500 2 1.500 4 0 6M14 4c2.500 3 2.500 7 0 10M16.500 1.500c4 4.500 4 10.500 0 15" stroke="#fff" strokeWidth="1.4" /></Svg>
      <Svg className="ml-[10px]" w={20} h={17}><rect x="4" y="3" width="13" height="11" rx="2" stroke="#fff" strokeWidth="1.5" /><path d="M6 5h9v7H6z" fill="#fff" stroke="none" /><path d="M18.500 6.500v4" stroke="#fff" strokeWidth="2" /><path d="M5-2L0 5h3l-1 5 5-7H4z" fill="#fff" stroke="#202124" strokeWidth=".6" /></Svg>
      <div className="ml-[21px] flex w-[72px] flex-col items-end text-[14.5px] leading-[20px]">
        <Fit className="w-[36px]">21:56</Fit><Fit className="w-[72px]">26.12.2024</Fit>
      </div>
      <Svg className="ml-[11px]" w={17} h={20}><path d="M8.500 0c4 0 6.300 3 6.300 6.500V11l2 4.500H.2L2.200 11V6.500C2.200 3 4.500 0 8.500 0zM5.500 17h6c-.5 3-5.500 3-6 0z" fill="#99ebff" stroke="none" /></Svg>
    </footer>
  );
}

export default function App() {
  return (
    <div className="flex h-[1080px] w-[1920px] flex-col overflow-hidden bg-[linear-gradient(125deg,#e1e6ea_0%,#e6e6ea_22%,#e2e6ef_40%,#e5e5ea_55%,#e3e5eb_75%,#e1e5e9_100%)] font-['Open_Sans',sans-serif]">
      <TitleBar />
      <Tabs />
      <Ribbon />
      <Ruler />
      <Document />
      <StatusBar />
      <Taskbar />
    </div>
  );
}
